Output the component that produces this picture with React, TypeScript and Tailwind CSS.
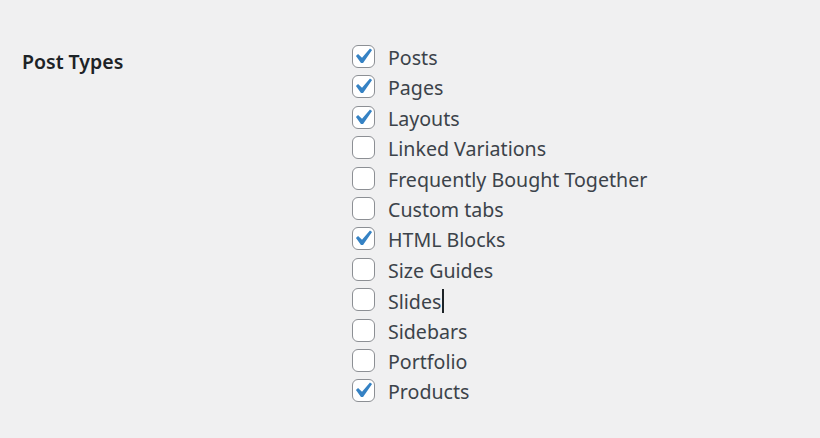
const postTypes = [
  { label: "Posts", checked: true },
  { label: "Pages", checked: true },
  { label: "Layouts", checked: true },
  { label: "Linked Variations", checked: false },
  { label: "Frequently Bought Together", checked: false },
  { label: "Custom tabs", checked: false },
  { label: "HTML Blocks", checked: true },
  { label: "Size Guides", checked: false },
  { label: "Slides", checked: false, caret: true },
  { label: "Sidebars", checked: false },
  { label: "Portfolio", checked: false },
  { label: "Products", checked: true },
];

function Checkbox({ checked }: { checked: boolean }) {
  return (
    <span className="relative block h-[23px] w-[23px] shrink-0 rounded-[6px] border border-[#8c8f94] bg-white">
      {checked && (
        <svg
          viewBox="0 0 20 20"
          className="absolute left-[-6px] top-[-5px] h-[31px] w-[31px]"
        >
          <path
            d="M14.83 4.89l1.34.94-5.81 8.38H9.02L5.78 9.67l1.34-1.25 2.57 2.4z"
            fill="#3582c4"
          />
        </svg>
      )}
    </span>
  );
}

export default function App() {
  return (
    <div className="h-[438px] w-[820px] bg-[#f0f0f1] font-['Noto_Sans',sans-serif] text-[#1d2327]">
      <div className="flex pt-[44px]">
        <div className="w-[352px] pl-[22px] pt-[3px] text-[19.5px] font-semibold leading-[30px]">
          Post Types
        </div>
        <div className="flex flex-col">
          {postTypes.map((t) => (
            <label
              key={t.label}
              className="flex h-[30.4px] items-start gap-[13px] pt-[1px] text-[19.6px] leading-[23px] text-[#3c434a]"
            >
              <Checkbox checked={t.checked} />
              <span className="flex items-center pt-[1px]">
                {t.label}
                {t.caret && (
                  <span className="ml-[1px] inline-block h-[24px] w-[2px] bg-[#1d2327]" />
                )}
              </span>
            </label>
          ))}
        </div>
      </div>
    </div>
  );
}
